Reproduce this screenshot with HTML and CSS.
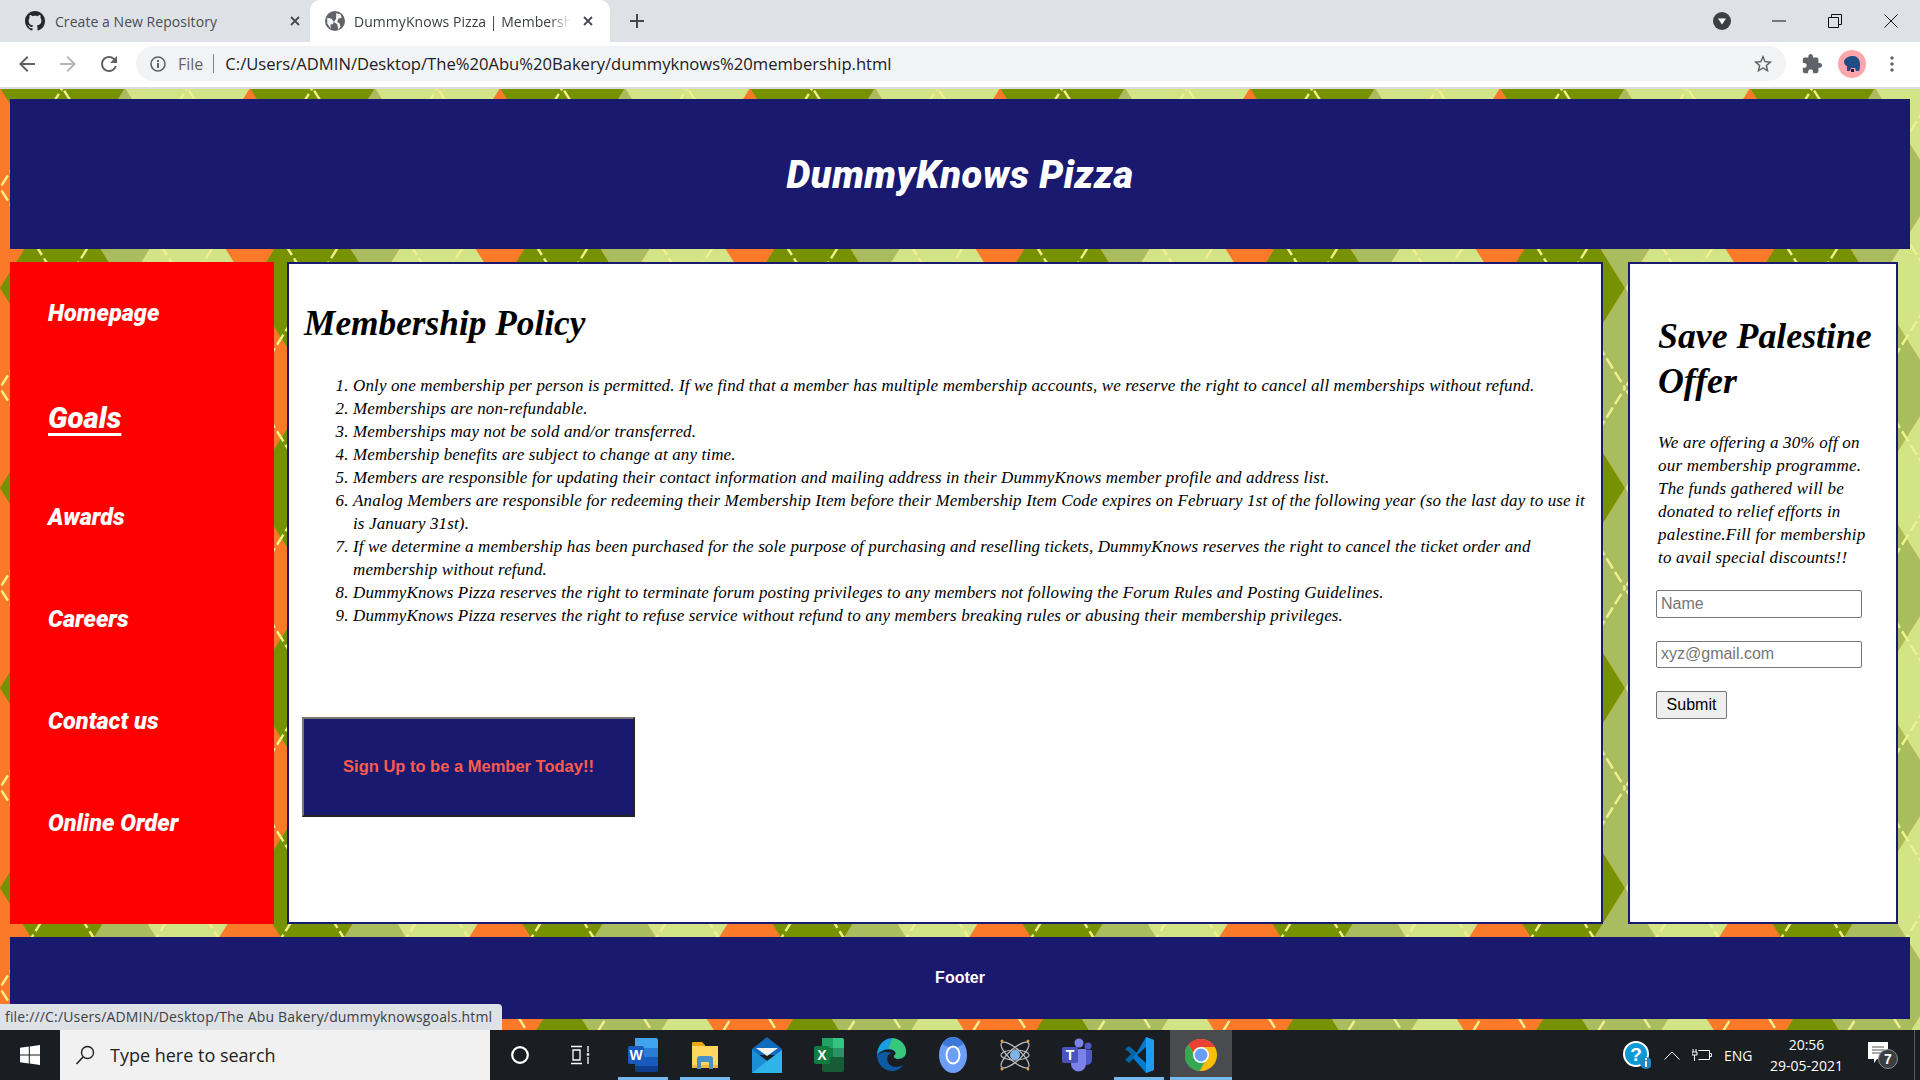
FILE: index.html
```html
<!DOCTYPE html>
<html lang="en">
<head>
  <meta charset="UTF-8" />
  <title>DummyKnows Pizza | Membership</title>
  <link rel="stylesheet" href="styles.css">
</head>
<body>
  <div class="tabstrip">
    <div class="tab">
      <svg class="tab-icon" viewBox="0 0 16 16"><path fill="#24292e" d="M8 0C3.58 0 0 3.58 0 8c0 3.54 2.29 6.53 5.47 7.59.4.07.55-.17.55-.38 0-.19-.01-.82-.01-1.49-2.01.37-2.53-.49-2.69-.94-.09-.23-.48-.94-.82-1.13-.28-.15-.68-.52-.01-.53.63-.01 1.08.58 1.23.82.72 1.21 1.87.87 2.33.66.07-.52.28-.87.51-1.07-1.78-.2-3.64-.89-3.64-3.95 0-.87.31-1.59.82-2.15-.08-.2-.36-1.02.08-2.12 0 0 .67-.21 2.2.82.64-.18 1.32-.27 2-.27.68 0 1.36.09 2 .27 1.53-1.04 2.2-.82 2.2-.82.44 1.1.16 1.92.08 2.12.51.56.82 1.27.82 2.15 0 3.07-1.87 3.75-3.65 3.95.29.25.54.73.54 1.48 0 1.07-.01 1.93-.01 2.2 0 .21.15.46.55.38A8.013 8.013 0 0016 8c0-4.42-3.58-8-8-8z"/></svg>
      <span class="tab-title">Create a New Repository</span>
      <svg class="tab-close" viewBox="0 0 10 10"><path d="M1 1l8 8M9 1l-8 8" stroke="#45484d" stroke-width="1.8"/></svg>
    </div>
    <div class="tab active">
      <svg class="tab-icon" viewBox="0 0 18 18"><circle cx="9" cy="9" r="9" fill="#5f6368"/><path fill="#fff" d="M2 6l4 1 2 3-1 2-2 0 0 4-3-5zM10 2l4 1 1 3-3 1-1 3 2 1 1 3-2 3-1-5-3-2 2-3 0-3z" opacity=".95"/></svg>
      <span class="tab-title">DummyKnows Pizza | Membership</span>
      <svg class="tab-close" viewBox="0 0 10 10"><path d="M1 1l8 8M9 1l-8 8" stroke="#45484d" stroke-width="1.8"/></svg>
    </div>
    <svg class="new-tab" viewBox="0 0 14 14"><path d="M7 0v14M0 7h14" stroke="#45484d" stroke-width="2"/></svg>
    <div class="window-controls">
      <svg class="tab-search" viewBox="0 0 18 18"><circle cx="9" cy="9" r="9" fill="#3c4043"/><path d="M5 6.5h8L9 12.5z" fill="#fff"/></svg>
      <svg class="win-btn" viewBox="0 0 14 14"><path d="M0 7h14" stroke="#111" stroke-width="1"/></svg>
      <svg class="win-btn" viewBox="0 0 14 14"><path d="M.5 3.5h10v10H.5zM3.5 3.5v-3h10v10h-3" fill="none" stroke="#111"/></svg>
      <svg class="win-btn" viewBox="0 0 14 14"><path d="M.5.5l13 13M13.5.5l-13 13" stroke="#111"/></svg>
    </div>
  </div>

  <div class="toolbar">
    <svg class="tool-icon" viewBox="0 0 24 24"><path fill="#5f6368" d="M20 11H7.83l5.59-5.59L12 4l-8 8 8 8 1.41-1.41L7.83 13H20v-2z"/></svg>
    <svg class="tool-icon" viewBox="0 0 24 24"><path fill="#b4b7bb" d="M4 11h12.17l-5.59-5.59L12 4l8 8-8 8-1.41-1.41L16.17 13H4v-2z"/></svg>
    <svg class="tool-icon" viewBox="0 0 24 24"><path fill="#5f6368" d="M17.65 6.35A7.958 7.958 0 0012 4c-4.42 0-7.99 3.58-7.99 8s3.57 8 7.99 8c3.73 0 6.84-2.55 7.73-6h-2.08A5.99 5.99 0 0112 18c-3.31 0-6-2.69-6-6s2.69-6 6-6c1.66 0 3.14.69 4.22 1.78L13 11h7V4l-2.35 2.35z"/></svg>
    <div class="omnibox">
      <svg class="info-icon" viewBox="0 0 16 16"><circle cx="8" cy="8" r="7" fill="none" stroke="#5f6368" stroke-width="1.6"/><path d="M7 7h2v5H7zM7 4h2v2H7z" fill="#5f6368"/></svg>
      <span class="scheme">File</span>
      <span class="omni-sep"></span>
      <span class="url">C:/Users/ADMIN/Desktop/The%20Abu%20Bakery/dummyknows%20membership.html</span>
      <svg class="star" viewBox="0 0 24 24"><path fill="#5f6368" d="M22 9.24l-7.19-.62L12 2 9.19 8.63 2 9.24l5.46 4.73L5.82 21 12 17.27 18.18 21l-1.63-7.03L22 9.24zM12 15.4l-3.76 2.27 1-4.28-3.32-2.88 4.38-.38L12 6.1l1.71 4.04 4.38.38-3.32 2.88 1 4.28L12 15.4z"/></svg>
    </div>
    <svg class="puzzle" viewBox="0 0 24 24"><path fill="#5f6368" d="M20.5 11H19V7c0-1.1-.9-2-2-2h-4V3.5C13 2.12 11.88 1 10.5 1S8 2.12 8 3.5V5H4c-1.1 0-1.99.9-1.99 2v3.8H3.5c1.49 0 2.7 1.21 2.7 2.7s-1.21 2.7-2.7 2.7H2V20c0 1.1.9 2 2 2h3.8v-1.5c0-1.49 1.21-2.7 2.7-2.7 1.49 0 2.7 1.21 2.7 2.7V22H17c1.1 0 2-.9 2-2v-4h1.5c1.38 0 2.5-1.12 2.5-2.5S21.88 11 20.5 11z"/></svg>
    <svg class="avatar" viewBox="0 0 28 28"><circle cx="14" cy="14" r="14" fill="#ffa6ad"/><path fill="#1f4e86" d="M6 11c1-3 5-5 9-5 4 0 7 3 7 8 0 3 0 5-1 7h-3l-1-3-4 0-1 3H9l0-5c-2 0-3-3-3-5z"/><path fill="#0f1f33" d="M13 19h3v3h-3z"/></svg>
    <svg class="dots" viewBox="0 0 4 16"><circle cx="2" cy="2" r="1.7" fill="#5f6368"/><circle cx="2" cy="8" r="1.7" fill="#5f6368"/><circle cx="2" cy="14" r="1.7" fill="#5f6368"/></svg>
  </div>

  <div class="page">
    <svg class="argyle" aria-hidden="true">
      <defs>
        <pattern id="argyle-tile" width="250" height="200" patternUnits="userSpaceOnUse" y="-1">
          <rect width="250" height="200" fill="#fa7a2a"/>
          <path fill="#769200" d="M0 0L62.5 -100L125 0L62.5 100zM0 200L62.5 100L125 200L62.5 300z"/>
          <path fill="#a9bd5f" d="M62.5 100L125 0L187.5 100L125 200z"/>
          <path fill="#d3e487" d="M125 0L187.5 -100L250 0L187.5 100zM125 200L187.5 100L250 200L187.5 300z"/>
          <path fill="none" stroke="#f1f08e" stroke-width="2.4" stroke-dasharray="12 4" stroke-dashoffset="-3" d="M0 100L62.5 0M62.5 0L125 100M125 100L187.5 0M187.5 0L250 100M0 100L62.5 200M62.5 200L125 100M125 100L187.5 200M187.5 200L250 100"/>
        </pattern>
      </defs>
      <rect width="100%" height="100%" fill="url(#argyle-tile)"/>
    </svg>

    <header class="site-header">
      <h1>DummyKnows Pizza</h1>
    </header>

    <div class="columns">
      <nav class="side-nav">
        <a href="#">Homepage</a>
        <a href="#" class="current">Goals</a>
        <a href="#">Awards</a>
        <a href="#">Careers</a>
        <a href="#">Contact us</a>
        <a href="#">Online Order</a>
      </nav>

      <main class="policy">
        <h2>Membership Policy</h2>
        <ol>
          <li>Only one membership per person is permitted. If we find that a member has multiple membership accounts, we reserve the right to cancel all memberships without refund.</li>
          <li>Memberships are non-refundable.</li>
          <li>Memberships may not be sold and/or transferred.</li>
          <li>Membership benefits are subject to change at any time.</li>
          <li>Members are responsible for updating their contact information and mailing address in their DummyKnows member profile and address list.</li>
          <li>Analog Members are responsible for redeeming their Membership Item before their Membership Item Code expires on February 1st of the following year (so the last day to use it<br>is January 31st).</li>
          <li>If we determine a membership has been purchased for the sole purpose of purchasing and reselling tickets, DummyKnows reserves the right to cancel the ticket order and<br>membership without refund.</li>
          <li>DummyKnows Pizza reserves the right to terminate forum posting privileges to any members not following the Forum Rules and Posting Guidelines.</li>
          <li>DummyKnows Pizza reserves the right to refuse service without refund to any members breaking rules or abusing their membership privileges.</li>
        </ol>
        <button class="signup">Sign Up to be a Member Today!!</button>
      </main>

      <aside class="offer">
        <h2>Save Palestine Offer</h2>
        <p>We are offering a 30% off on<br>our membership programme.<br>The funds gathered will be<br>donated to relief efforts in<br>palestine.Fill for membership<br>to avail special discounts!!</p>
        <form class="offer-form">
          <input type="text" placeholder="Name">
          <input type="text" placeholder="xyz@gmail.com">
          <input type="submit" value="Submit">
        </form>
      </aside>
    </div>

    <footer class="site-footer">Footer</footer>
    <div class="status-bubble">file:///C:/Users/ADMIN/Desktop/The Abu Bakery/dummyknowsgoals.html</div>
  </div>

  <div class="taskbar">
    <div class="start">
      <svg viewBox="0 0 20 20" width="20" height="20"><path fill="#fff" d="M0 2.8L8.8 1.6V9.5H0zM9.8 1.4L20 0V9.5H9.8zM0 10.5H8.8V18.4L0 17.2zM9.8 10.5H20V20L9.8 18.6z"/></svg>
    </div>
    <div class="search">
      <svg viewBox="0 0 20 20" width="20" height="20"><circle cx="12.5" cy="7.5" r="6" fill="none" stroke="#222" stroke-width="1.4"/><path d="M8 12L1.5 19" stroke="#222" stroke-width="1.6"/></svg>
      <span>Type here to search</span>
    </div>
    <div class="task-btn">
      <svg viewBox="0 0 20 20" width="20" height="20"><circle cx="10" cy="10" r="7.8" fill="none" stroke="#fff" stroke-width="2.2"/></svg>
    </div>
    <div class="task-btn">
      <svg viewBox="0 0 20 20" width="20" height="20"><path fill="none" stroke="#fff" stroke-width="1.3" d="M1 1.5h11M1 18.5h11M3 5h7v10H3zM18 1v6M18 12v7"/><rect x="16.8" y="8.2" width="2.4" height="2.4" fill="#fff"/></svg>
    </div>

    <div class="app running">
      <svg viewBox="0 0 30 34" width="30" height="34"><path fill="#41a5ee" d="M7 0h21a2 2 0 012 2v8H7z"/><path fill="#2b7cd3" d="M7 10h23v9H7z"/><path fill="#185abd" d="M7 19h23v9H7z"/><path fill="#103f91" d="M7 28h23v4a2 2 0 01-2 2H9a2 2 0 01-2-2z"/><rect x="0" y="8" width="16" height="18" rx="2" fill="#185abd"/><text x="8" y="22" class="app-letter">W</text></svg>
    </div>
    <div class="app running">
      <svg viewBox="0 0 28 28" width="28" height="28"><path fill="#e8a90f" d="M1 2a1 1 0 011-1h9l3 3v6H1z"/><path fill="#ffd75e" d="M1 5h26v22H1z"/><path fill="#f0b73a" d="M1 24h26v3H1z"/><path fill="#4a90c8" d="M6 28V18a3 3 0 013-3h10a3 3 0 013 3v10h-4v-7h-8v7z"/></svg>
    </div>
    <div class="app">
      <svg viewBox="0 0 30 36" width="30" height="36"><path fill="#0f6cbd" d="M15 0L30 12v6H0v-6z"/><path fill="#2fb4ea" d="M0 13l15 11 15-11v23H0z"/><path fill="#1b8ed6" d="M0 36V13l15 11z"/><path fill="#f2f2f2" d="M4 11h22l-11 8z"/></svg>
    </div>
    <div class="app">
      <svg viewBox="0 0 30 34" width="30" height="34"><path fill="#33c481" d="M8 0h20a2 2 0 012 2v8H19V0z"/><path fill="#21a366" d="M8 0h11v10H8z"/><path fill="#107c41" d="M8 10h11v9H8z"/><path fill="#33c481" opacity=".7" d="M19 10h11v9H19z"/><path fill="#185c37" d="M8 19h22v13a2 2 0 01-2 2H10a2 2 0 01-2-2z"/><rect x="0" y="8" width="16" height="18" rx="2" fill="#107c41"/><text x="8" y="22" class="app-letter">X</text></svg>
    </div>
    <div class="app">
      <svg viewBox="0 0 32 36" width="30" height="36"><path fill="#0c59a4" d="M1 19C2 30 11 36 19 35c4-.5 8-3 10-6-8 4-17 1-17-7 0-3 2-6 5-6-7-3-15 0-16 3z"/><path fill="#1b9de2" d="M1 19C1 8 8 0 17 0c8 0 15 6 15 14 0 5-3 8-8 8-3 0-5-1-5-3 2-1 3-3 1-5-3-3-10-3-14 0-3 1-4 3-5 5z"/><path fill="#37c87a" d="M17 0c8 0 15 6 15 14 0 5-3 8-8 8-3 0-5-1-5-3 2-1 3-3 1-5-1-2-4-3-7-3 3-6 4-11 4-11z"/></svg>
    </div>
    <div class="app">
      <svg viewBox="0 0 28 36" width="28" height="36"><ellipse cx="14" cy="18" rx="14" ry="18" fill="#6c9ef8"/><path fill="#3c78d8" d="M3 7A14 18 0 0125 7L14 12z"/><ellipse cx="14" cy="18" rx="7.5" ry="9.5" fill="#fff"/><ellipse cx="14" cy="18" rx="5.5" ry="7.5" fill="#6c9ef8"/></svg>
    </div>
    <div class="app">
      <svg viewBox="0 0 30 34" width="30" height="34"><g fill="none" stroke="#b9bcc0" stroke-width="1.2"><ellipse cx="15" cy="17" rx="18" ry="6" transform="rotate(42 15 17)"/><ellipse cx="15" cy="17" rx="18" ry="6" transform="rotate(-42 15 17)"/><ellipse cx="15" cy="17" rx="14" ry="5"/></g><circle cx="15" cy="17" r="5" fill="#7fb2e5"/><circle cx="2" cy="3" r="1.5" fill="#d8a24a"/><circle cx="28" cy="3" r="1.5" fill="#d8a24a"/><circle cx="2" cy="31" r="1.5" fill="#d8a24a"/><circle cx="28" cy="31" r="1.5" fill="#d8a24a"/></svg>
    </div>
    <div class="app">
      <svg viewBox="0 0 30 34" width="30" height="34"><circle cx="17" cy="5" r="4.5" fill="#7b83eb"/><circle cx="26" cy="8" r="3.5" fill="#5059c9"/><path fill="#5059c9" d="M20 12h10v10a5 5 0 01-10 0z"/><path fill="#7b83eb" d="M9 11h15v15a7.5 7.5 0 01-15 0z"/><rect x="0" y="9" width="16" height="16" rx="2" fill="#4b53bc"/><text x="8" y="22" class="app-letter">T</text></svg>
    </div>
    <div class="app running">
      <svg viewBox="0 0 30 36" width="30" height="36"><path fill="#0065a9" d="M1 12l4-3 9 8-9 9-4-3 6-6z"/><path fill="#007acc" d="M22 0l8 3v30l-8 3-13-15 3-4z"/><path fill="#1f9cf0" d="M22 0l8 3v30l-8 3z"/><path fill="#1a1d22" d="M22 10L13 18l9 8z"/></svg>
    </div>
    <div class="app running current">
      <svg viewBox="0 0 32 32" width="32" height="34"><circle cx="16" cy="16" r="16" fill="#fbbc05"/><path fill="#ea4335" d="M16 0a16 16 0 0113.9 8H16a8 8 0 00-7.7 5.8L3.2 5.6A16 16 0 0116 0z"/><path fill="#34a853" d="M3.2 5.6l6.9 12a8 8 0 009.6 5.5L14.6 32A16 16 0 013.2 5.6z"/><circle cx="16" cy="16" r="8" fill="#fff"/><circle cx="16" cy="16" r="6.4" fill="#6a9ef5"/></svg>
    </div>

    <div class="tray">
      <svg class="tray-help" viewBox="0 0 28 28" width="28" height="28"><circle cx="13" cy="13" r="12" fill="#0a9ad6" stroke="#fff" stroke-width="2"/><text x="13" y="20" class="help-mark">?</text><circle cx="23" cy="22" r="6" fill="#1e88c7"/><path d="M22 20h2v6h-2zM22 17h2v2h-2z" fill="#fff"/></svg>
      <svg class="tray-chevron" viewBox="0 0 16 9" width="16" height="9"><path d="M.5 8.5L8 1l7.5 7.5" fill="none" stroke="#fff"/></svg>
      <svg class="tray-power" viewBox="0 0 20 12" width="20" height="12"><path d="M6.5 1.5h11v9h-11M17.5 4.5h2v3h-2" fill="none" stroke="#fff"/><path d="M1 0v3M4 0v3M0 3h5v3H0zM2.5 6v6" fill="none" stroke="#fff"/></svg>
      <span class="tray-lang">ENG</span>
      <div class="clock"><span>20:56</span><span>29-05-2021</span></div>
      <svg class="tray-notify" viewBox="0 0 32 30" width="32" height="30"><path d="M0 2h20v17H9l-3 4v-4H0z" fill="#fff"/><path d="M4 7h12M4 10h12M4 13h12" stroke="#555" stroke-width="1"/><circle cx="20" cy="19" r="9.5" fill="#3a3d41" stroke="#8a8d90"/><text x="20" y="24" class="notify-count">7</text></svg>
      <span class="desktop-edge"></span>
    </div>
  </div>
</body>
</html>
```

FILE: styles.css
```css
* {
  box-sizing: border-box;
}

body {
  margin: 0;
  width: 1920px;
  height: 1080px;
  overflow: hidden;
  font-family: "Liberation Sans", sans-serif;
}

/* browser chrome */
.tabstrip {
  display: flex;
  align-items: center;
  height: 42px;
  background: #dee1e6;
}

.tab {
  display: flex;
  align-items: center;
  width: 310px;
  height: 42px;
  padding-left: 25px;
  font-family: "Open Sans", sans-serif;
  font-size: 14px;
  letter-spacing: .05px;
  color: #4a4d52;
}

.tab.active {
  width: 300px;
  padding-left: 15px;
  background: #fff;
  border-radius: 10px 10px 0 0;
  color: #3c4043;
}

.tab-icon {
  width: 20px;
  height: 20px;
  flex: none;
}

.tab-title {
  margin-left: 10px;
  width: 228px;
  white-space: nowrap;
  overflow: hidden;
}

.tab.active .tab-title {
  width: 217px;
  margin-left: 9px;
  -webkit-mask-image: linear-gradient(to right, #000 90%, transparent);
  mask-image: linear-gradient(to right, #000 90%, transparent);
}

.tab-close {
  width: 10px;
  height: 10px;
  margin-left: 7px;
  flex: none;
}

.tab.active .tab-close {
  margin-left: 12px;
}

.new-tab {
  width: 14px;
  height: 14px;
  margin-left: 20px;
}

.window-controls {
  display: flex;
  align-items: center;
  margin-left: auto;
}

.tab-search {
  width: 18px;
  height: 18px;
  margin-right: 41px;
}

.win-btn {
  width: 14px;
  height: 14px;
  margin-right: 42px;
}

.win-btn:last-child {
  margin-right: 22px;
}

.toolbar {
  display: flex;
  align-items: center;
  height: 47px;
  padding: 0 0 2px 15px;
  background: #fff;
  border-bottom: 2px solid #dadce0;
}

.tool-icon {
  width: 24px;
  height: 24px;
  margin-right: 17px;
}

.omnibox {
  display: flex;
  align-items: center;
  width: 1650px;
  height: 35px;
  margin-left: -2px;
  padding-left: 14px;
  background: #f1f3f4;
  border-radius: 18px;
  font-family: "Open Sans", sans-serif;
  font-size: 16.6px;
}

.info-icon {
  width: 16px;
  height: 16px;
}

.scheme {
  margin-left: 12px;
  font-size: 16px;
  color: #5f6368;
}

.omni-sep {
  width: 1px;
  height: 19px;
  margin: 0 11px 0 10px;
  background: #80868b;
}

.url {
  color: #202124;
}

.star {
  width: 22px;
  height: 22px;
  margin-left: auto;
  margin-right: 12px;
}

.puzzle {
  width: 22px;
  height: 22px;
  margin-left: 15px;
}

.avatar {
  width: 28px;
  height: 28px;
  margin-left: 15px;
}

.dots {
  width: 4px;
  height: 16px;
  margin-left: 24px;
}

/* page */
.page {
  position: relative;
  height: 941px;
  padding: 10px 10px 11px;
  display: flex;
  flex-direction: column;
  gap: 13px;
}

.argyle {
  position: absolute;
  top: 0;
  left: 0;
  width: 100%;
  height: 100%;
}

.site-header,
.columns,
.site-footer {
  position: relative;
}

.site-header {
  height: 150px;
  display: flex;
  align-items: center;
  justify-content: center;
  padding-top: 2px;
  background: #191970;
  color: #fff;
}

.site-header h1 {
  margin: 0;
  font-family: Roboto, sans-serif;
  font-weight: 900;
  font-style: italic;
  font-size: 38px;
  letter-spacing: .5px;
}

.columns {
  height: 662px;
  display: flex;
  align-items: stretch;
}

.side-nav {
  width: 264px;
  padding-left: 38px;
  background: #f00;
  display: flex;
  flex-direction: column;
}

.side-nav a {
  height: 102px;
  display: flex;
  align-items: center;
  align-self: flex-start;
  color: #fff;
  font-family: Roboto, sans-serif;
  font-weight: 900;
  font-style: italic;
  font-size: 23.5px;
  text-decoration: none;
}

.side-nav a.current {
  padding-top: 6px;
  font-size: 29.5px;
  text-decoration: underline;
  text-underline-offset: 5px;
  text-decoration-thickness: 2.5px;
}

.policy {
  width: 1316px;
  margin-left: 13px;
  padding: 36px 13px 0;
  background: #fff;
  border: 2px solid #191970;
}

.policy h2 {
  margin: 0 0 26px 2px;
  font-family: "Liberation Serif", serif;
  font-style: italic;
  font-weight: bold;
  font-size: 35.3px;
  line-height: 48px;
}

.policy ol {
  margin: 0;
  padding-left: 51px;
  font-family: "Liberation Serif", serif;
  font-style: italic;
  font-size: 17px;
  letter-spacing: .13px;
  line-height: 23px;
}

.signup {
  display: block;
  width: 333px;
  height: 100px;
  margin-top: 90px;
  padding-bottom: 3px;
  background: #191970;
  border: 2px outset #777;
  color: #ff5b4d;
  font-family: "Liberation Sans", sans-serif;
  font-weight: bold;
  font-size: 16.5px;
}

.offer {
  width: 270px;
  margin-left: 25px;
  padding: 50px 0 0 26px;
  background: #fff;
  border: 2px solid #191970;
}

.offer h2 {
  margin: 0 0 27px 2px;
  max-width: 230px;
  font-family: "Liberation Serif", serif;
  font-style: italic;
  font-weight: bold;
  font-size: 35.8px;
  line-height: 45px;
}

.offer p {
  margin: 0 0 21px 2px;
  font-family: "Liberation Serif", serif;
  font-style: italic;
  font-size: 17px;
  letter-spacing: .2px;
  line-height: 23px;
  white-space: nowrap;
}

.offer-form {
  display: flex;
  flex-direction: column;
  align-items: flex-start;
  gap: 23px;
}

.offer-form input {
  width: 206px;
  height: 27.5px;
  padding: 1px 4px;
  border: 1px solid #767676;
  border-radius: 2px;
  font-family: "Liberation Sans", sans-serif;
  font-size: 16px;
}

.offer-form input[type="submit"] {
  width: 71px;
  background: #efefef;
  color: #000;
}

.site-footer {
  height: 82px;
  padding-top: 32px;
  text-align: center;
  background: #191970;
  color: #fff;
  font-weight: bold;
  font-size: 16px;
}

.status-bubble {
  position: absolute;
  left: 0;
  bottom: 0;
  width: 502px;
  height: 26px;
  padding: 4px 0 0 5px;
  background: #dee1e6;
  border-top-right-radius: 4px;
  font-family: "Open Sans", sans-serif;
  font-size: 14px;
  letter-spacing: .17px;
  line-height: 18px;
  color: #3c4043;
  white-space: nowrap;
}

/* windows taskbar */
.taskbar {
  display: flex;
  align-items: center;
  height: 50px;
  background: #1a1d22;
  color: #fff;
  font-family: "Open Sans", sans-serif;
}

.start {
  width: 60px;
  height: 50px;
  display: flex;
  align-items: center;
  justify-content: center;
}

.search {
  width: 430px;
  height: 50px;
  display: flex;
  align-items: center;
  gap: 15px;
  padding-left: 15px;
  background: #f1f1f1;
  color: #222;
  font-size: 18px;
}

.task-btn {
  width: 60px;
  display: flex;
  justify-content: center;
}

.task-btn + .app {
  margin-left: 2px;
}

.app {
  position: relative;
  width: 62px;
  height: 50px;
  display: flex;
  align-items: center;
  justify-content: center;
}

.app.running::after {
  content: "";
  position: absolute;
  left: 6px;
  right: 6px;
  bottom: 0;
  height: 3px;
  background: #76b9ed;
}

.app.current {
  background: #4a4b4f;
}

.app.current::after {
  left: 0;
  right: 0;
}

.app-letter {
  font-family: "Liberation Sans", sans-serif;
  font-weight: bold;
  font-size: 14px;
  fill: #fff;
  text-anchor: middle;
}

.tray {
  position: relative;
  flex: 1;
  height: 50px;
  display: flex;
  align-items: center;
  padding-left: 391px;
}

.help-mark {
  font-family: "Liberation Sans", sans-serif;
  font-weight: bold;
  font-size: 19px;
  fill: #fff;
  text-anchor: middle;
}

.tray-chevron {
  margin-left: 13px;
}

.tray-power {
  margin-left: 12px;
}

.tray-lang {
  margin-left: 12px;
  font-size: 14px;
}

.clock {
  width: 92px;
  margin-left: 8px;
  display: flex;
  flex-direction: column;
  align-items: center;
  gap: 3px;
  font-size: 14px;
  line-height: 18px;
}

.tray-notify {
  margin-left: 15px;
}

.notify-count {
  font-family: "Liberation Sans", sans-serif;
  font-weight: bold;
  font-size: 14px;
  fill: #fff;
  text-anchor: middle;
}

.desktop-edge {
  position: absolute;
  right: 5px;
  top: 0;
  width: 1px;
  height: 50px;
  background: #5a5d62;
}
```
